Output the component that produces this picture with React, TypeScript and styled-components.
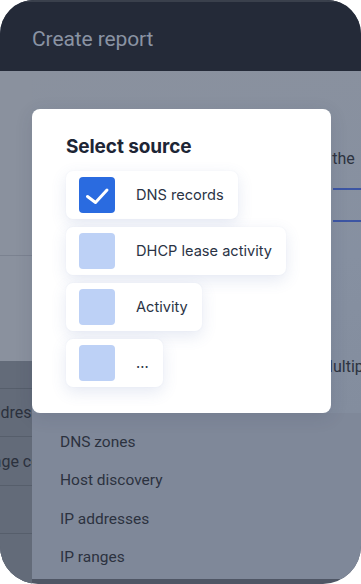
import React from "react";
import styled, { createGlobalStyle } from "styled-components";

const Global = createGlobalStyle`
  html, body { margin: 0; padding: 0; background: #ffffff; }
  * { box-sizing: border-box; }
  #root { width: 361px; height: 584px; }
`;

const Frame = styled.div`
  width: 361px;
  height: 584px;
  border-radius: 34px 34px 38px 38px;
  overflow: hidden;
  background: #4f5665;
  display: flex;
  flex-direction: column;
  font-family: Roboto, "Liberation Sans", sans-serif;
`;

const Header = styled.header`
  height: 71px;
  flex: none;
  background: #242a38;
  border-top: 2px solid #3a404c;
  display: flex;
  align-items: center;
  padding: 4px 32px 0;
`;

const HeaderTitle = styled.h1`
  margin: 0;
  font-size: 21px;
  font-weight: 400;
  color: #8a93a3;
  letter-spacing: -0.1px;
`;

const Main = styled.main`
  position: relative;
  flex: 1;
  display: flex;
  min-height: 0;
`;

const LeftRail = styled.aside`
  width: 32px;
  flex: none;
  display: flex;
  flex-direction: column;
  overflow: hidden;
  background: #5f6776;
`;

const RailBlock = styled.div<{ $h: number; $tone: "light" | "dark"; $line?: boolean }>`
  height: ${(p) => p.$h}px;
  flex: none;
  background: ${(p) => (p.$tone === "light" ? "#8a919e" : "#636b79")};
  border-bottom: ${(p) => (p.$line ? "1px solid " + (p.$tone === "light" ? "#7b8290" : "#565e6b") : "none")};
  display: flex;
  align-items: center;
  white-space: nowrap;
  font-size: 16px;
  color: #2b313d;
`;

const ClippedText = styled.span<{ $shift: number }>`
  margin-left: ${(p) => p.$shift}px;
`;

const Content = styled.section`
  flex: 1;
  display: flex;
  flex-direction: column;
  min-width: 0;
`;

const Backdrop = styled.div`
  height: 342px;
  flex: none;
  background: linear-gradient(170deg, #8a919e 0%, #8690a1 60%, #838d9e 100%);
  padding: 78px 0 0 282px;
  display: flex;
  flex-direction: column;
  overflow: hidden;
  white-space: nowrap;
`;

const BackText = styled.div<{ $indent?: number }>`
  font-size: 16px;
  line-height: 20px;
  color: #2d3340;
  margin-left: ${(p) => p.$indent ?? 0}px;
`;

const BackInput = styled.div`
  margin: 19px 0 0 19px;
  height: 34px;
  border-top: 2px solid #3c55a3;
  border-bottom: 2px solid #3c55a3;
  width: 60px;
`;

const Spacer = styled.div<{ $h: number }>`
  height: ${(p) => p.$h}px;
  flex: none;
`;

const Menu = styled.ul`
  list-style: none;
  margin: 0;
  height: 166px;
  flex: none;
  padding: 10px 0 0 28px;
  background: #7f8899;
`;

const MenuItem = styled.li`
  height: 38.3px;
  display: flex;
  align-items: center;
  font-size: 15.5px;
  color: #2c323f;
`;

const Modal = styled.div`
  position: absolute;
  left: 32px;
  top: 38px;
  width: 299px;
  height: 304px;
  background: #ffffff;
  border-radius: 8px;
  padding: 26px 34px 0;
  font-family: Inter, "Noto Sans", sans-serif;
  box-shadow: 0 4px 18px rgba(30, 40, 70, 0.12);
`;

const ModalTitle = styled.h2`
  margin: 0 0 12px;
  font-size: 19px;
  line-height: 24px;
  font-weight: 700;
  color: #1d2535;
  letter-spacing: -0.1px;
`;

const Options = styled.div`
  display: flex;
  flex-direction: column;
  align-items: flex-start;
  gap: 8px;
`;

const Option = styled.label`
  height: 48px;
  display: flex;
  align-items: center;
  gap: 21px;
  padding: 0 14px 0 13px;
  background: #ffffff;
  border-radius: 7px;
  box-shadow: 0 5px 16px rgba(70, 100, 170, 0.14), 0 0 2px rgba(70, 100, 170, 0.06);
  font-size: 14.6px;
  color: #2a3345;
  white-space: nowrap;
`;

const Box = styled.span<{ $checked: boolean }>`
  width: 36px;
  height: 36px;
  flex: none;
  border-radius: 4px;
  background: ${(p) => (p.$checked ? "#2a6be0" : "#bdd1f6")};
  display: flex;
  align-items: center;
  justify-content: center;
`;

const options = [
  { label: "DNS records", checked: true },
  { label: "DHCP lease activity", checked: false },
  { label: "Activity", checked: false },
  { label: "...", checked: false },
];

const menuItems = ["DNS zones", "Host discovery", "IP addresses", "IP ranges"];

export default function App() {
  return (
    <>
      <Global />
      <Frame>
        <Header>
          <HeaderTitle>Create report</HeaderTitle>
        </Header>
        <Main>
          <LeftRail>
            <RailBlock $h={185} $tone="light" $line />
            <RailBlock $h={105} $tone="light" />
            <RailBlock $h={28} $tone="dark" $line />
            <RailBlock $h={48} $tone="dark" $line>
              <ClippedText $shift={-19}>Addresses</ClippedText>
            </RailBlock>
            <RailBlock $h={49} $tone="dark" $line>
              <ClippedText $shift={-26}>Range count</ClippedText>
            </RailBlock>
            <RailBlock $h={48} $tone="dark" $line />
            <RailBlock $h={60} $tone="dark" />
          </LeftRail>
          <Content>
            <Backdrop>
              <BackText>to the</BackText>
              <BackInput />
              <Spacer $h={135} />
              <BackText $indent={5}>Multiple</BackText>
            </Backdrop>
            <Menu>
              {menuItems.map((m) => (
                <MenuItem key={m}>{m}</MenuItem>
              ))}
            </Menu>
          </Content>
          <Modal>
            <ModalTitle>Select source</ModalTitle>
            <Options>
              {options.map((o) => (
                <Option key={o.label}>
                  <Box $checked={o.checked}>
                    {o.checked && (
                      <svg width="36" height="36" viewBox="0 0 36 36" fill="none">
                        <path
                          d="M8.5 19.5 L16.5 25.5 L28 13"
                          stroke="#ffffff"
                          strokeWidth="3"
                          strokeLinecap="round"
                          strokeLinejoin="round"
                        />
                      </svg>
                    )}
                  </Box>
                  {o.label}
                </Option>
              ))}
            </Options>
          </Modal>
        </Main>
      </Frame>
    </>
  );
}
